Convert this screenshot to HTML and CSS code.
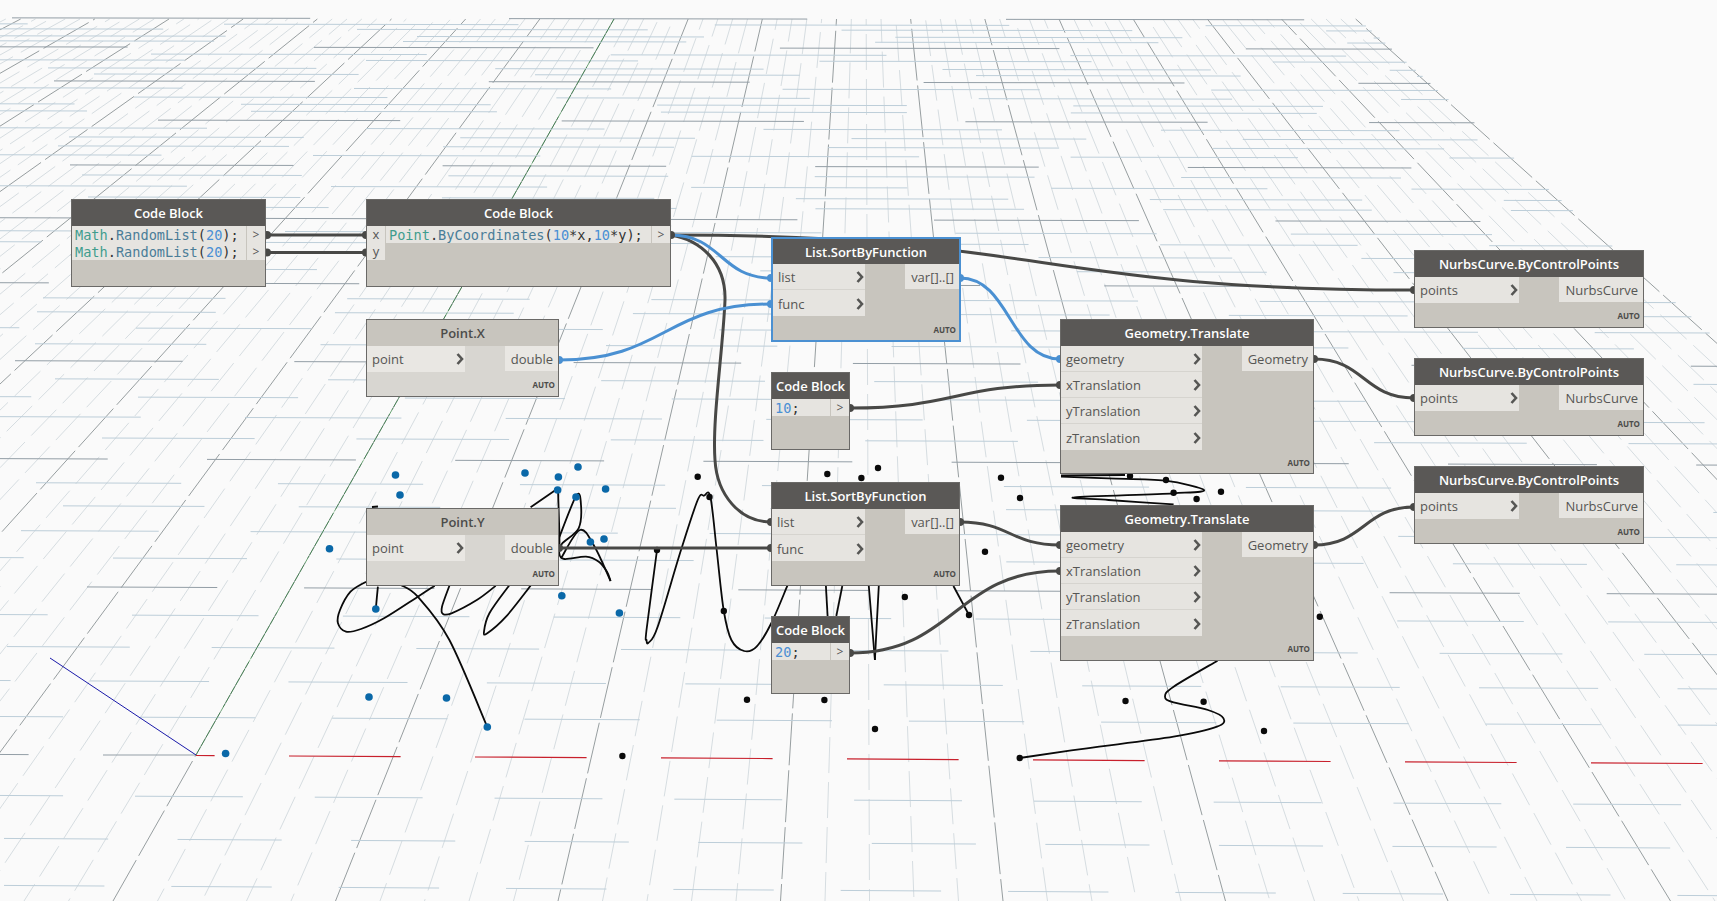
FILE: index.html
```html
<!DOCTYPE html>
<html lang="en">
<head>
  <meta charset="UTF-8" />
  <title>Dynamo graph</title>
  <link rel="stylesheet" href="styles.css">
</head>
<body>
  <div class="canvas">
    <!-- background 3D preview, filled in by scene.js -->
    <svg class="layer scene" id="scene" width="1717" height="901"></svg>

    <svg class="layer wires" width="1717" height="901">
      <path d="M267 235H366" />
      <path d="M267 252.500H366" />
      <path d="M671 235C700 240 726 262 725 300C723 350 712 420 715 460C717 495 740 522 771 522" />
      <path d="M671 235C1042 235 1042 290 1414 290" />
      <path d="M850 408C955 408 955 385 1060 385" />
      <path d="M1314 359C1364 359 1364 398 1414 398" />
      <path d="M559 548H771" />
      <path d="M960 522C1010 522 1010 545 1060 545" />
      <path d="M850 653C955 653 955 571 1060 571" />
      <path d="M1314 545C1364 545 1364 507 1414 507" />
      <path class="sel" d="M671 235C721 235 721 278 771 278" />
      <path class="sel" d="M559 360C665 360 665 304 771 304" />
      <path class="sel" d="M960 278C1010 278 1010 359 1060 359" />
      <g class="nubs">
        <circle cx="267" cy="235" r="4" /><circle cx="366" cy="235" r="4" />
        <circle cx="267" cy="252.500" r="4" /><circle cx="366" cy="252.500" r="4" />
        <circle cx="671" cy="235" r="4" />
        <circle cx="771" cy="522" r="4" /><circle cx="771" cy="548" r="4" />
        <circle cx="559" cy="548" r="4" /><circle cx="960" cy="522" r="4" />
        <circle cx="1060" cy="545" r="4" /><circle cx="850" cy="653" r="4" />
        <circle cx="1060" cy="571" r="4" /><circle cx="850" cy="408" r="4" />
        <circle cx="1060" cy="385" r="4" /><circle cx="1314" cy="359" r="4" />
        <circle cx="1414" cy="398" r="4" /><circle cx="1414" cy="290" r="4" />
        <circle cx="1314" cy="545" r="4" /><circle cx="1414" cy="507" r="4" />
      </g>
      <g class="nubs sel">
        <circle cx="771" cy="278" r="4" /><circle cx="771" cy="304" r="4" />
        <circle cx="559" cy="360" r="4" /><circle cx="960" cy="278" r="4" />
        <circle cx="1060" cy="359" r="4" />
      </g>
    </svg>

    <svg width="0" height="0" class="defs">
      <symbol id="chev" viewBox="0 0 8 12"><path d="M1.500 1L6 6L1.500 11" /></symbol>
    </svg>

    <div class="node code-node cb-random">
      <div class="title">Code Block</div>
      <div class="code-grid two-col">
        <div class="code">
          <div class="line"><span class="cls">Math</span>.<span class="fn">RandomList</span>(<span class="num">20</span>);</div>
          <div class="line"><span class="cls">Math</span>.<span class="fn">RandomList</span>(<span class="num">20</span>);</div>
        </div>
        <div class="outs"><div class="out">&gt;</div><div class="out">&gt;</div></div>
      </div>
    </div>

    <div class="node code-node cb-point">
      <div class="title">Code Block</div>
      <div class="code-grid three-col">
        <div class="ins"><div class="var">x</div><div class="var">y</div></div>
        <div class="code">
          <div class="line"><span class="cls">Point</span>.<span class="fn">ByCoordinates</span>(<span class="num">10</span>*x,<span class="num">10</span>*y);</div>
        </div>
        <div class="outs"><div class="out">&gt;</div></div>
      </div>
    </div>

    <div class="node code-node cb-ten">
      <div class="title">Code Block</div>
      <div class="code-grid two-col">
        <div class="code"><div class="line"><span class="num">10</span>;</div></div>
        <div class="outs"><div class="out">&gt;</div></div>
      </div>
    </div>

    <div class="node code-node cb-twenty">
      <div class="title">Code Block</div>
      <div class="code-grid two-col">
        <div class="code"><div class="line"><span class="num">20</span>;</div></div>
        <div class="outs"><div class="out">&gt;</div></div>
      </div>
    </div>

    <div class="node fn-node off point-x">
      <div class="title">Point.X</div>
      <div class="ports">
        <div class="inputs">
          <div class="port">point<svg class="chev"><use href="#chev" /></svg></div>
        </div>
        <div class="output">double</div>
      </div>
      <div class="lacing">AUTO</div>
    </div>

    <div class="node fn-node off point-y">
      <div class="title">Point.Y</div>
      <div class="ports">
        <div class="inputs">
          <div class="port">point<svg class="chev"><use href="#chev" /></svg></div>
        </div>
        <div class="output">double</div>
      </div>
      <div class="lacing">AUTO</div>
    </div>

    <div class="node fn-node sort selected sort-a">
      <div class="title">List.SortByFunction</div>
      <div class="ports">
        <div class="inputs">
          <div class="port">list<svg class="chev"><use href="#chev" /></svg></div>
          <div class="port">func<svg class="chev"><use href="#chev" /></svg></div>
        </div>
        <div class="output">var[]..[]</div>
      </div>
      <div class="lacing">AUTO</div>
    </div>

    <div class="node fn-node sort sort-b">
      <div class="title">List.SortByFunction</div>
      <div class="ports">
        <div class="inputs">
          <div class="port">list<svg class="chev"><use href="#chev" /></svg></div>
          <div class="port">func<svg class="chev"><use href="#chev" /></svg></div>
        </div>
        <div class="output">var[]..[]</div>
      </div>
      <div class="lacing">AUTO</div>
    </div>

    <div class="node fn-node geo geo-a">
      <div class="title">Geometry.Translate</div>
      <div class="ports">
        <div class="inputs">
          <div class="port">geometry<svg class="chev"><use href="#chev" /></svg></div>
          <div class="port">xTranslation<svg class="chev"><use href="#chev" /></svg></div>
          <div class="port">yTranslation<svg class="chev"><use href="#chev" /></svg></div>
          <div class="port">zTranslation<svg class="chev"><use href="#chev" /></svg></div>
        </div>
        <div class="output">Geometry</div>
      </div>
      <div class="lacing">AUTO</div>
    </div>

    <div class="node fn-node geo geo-b">
      <div class="title">Geometry.Translate</div>
      <div class="ports">
        <div class="inputs">
          <div class="port">geometry<svg class="chev"><use href="#chev" /></svg></div>
          <div class="port">xTranslation<svg class="chev"><use href="#chev" /></svg></div>
          <div class="port">yTranslation<svg class="chev"><use href="#chev" /></svg></div>
          <div class="port">zTranslation<svg class="chev"><use href="#chev" /></svg></div>
        </div>
        <div class="output">Geometry</div>
      </div>
      <div class="lacing">AUTO</div>
    </div>

    <div class="node fn-node nurbs nurbs-a">
      <div class="title">NurbsCurve.ByControlPoints</div>
      <div class="ports">
        <div class="inputs">
          <div class="port">points<svg class="chev"><use href="#chev" /></svg></div>
        </div>
        <div class="output">NurbsCurve</div>
      </div>
      <div class="lacing">AUTO</div>
    </div>

    <div class="node fn-node nurbs nurbs-b">
      <div class="title">NurbsCurve.ByControlPoints</div>
      <div class="ports">
        <div class="inputs">
          <div class="port">points<svg class="chev"><use href="#chev" /></svg></div>
        </div>
        <div class="output">NurbsCurve</div>
      </div>
      <div class="lacing">AUTO</div>
    </div>

    <div class="node fn-node nurbs nurbs-c">
      <div class="title">NurbsCurve.ByControlPoints</div>
      <div class="ports">
        <div class="inputs">
          <div class="port">points<svg class="chev"><use href="#chev" /></svg></div>
        </div>
        <div class="output">NurbsCurve</div>
      </div>
      <div class="lacing">AUTO</div>
    </div>
  </div>

  <script src="scene.js"></script>
</body>
</html>
```

FILE: styles.css
```css
:root {
  --head: #5a5856;
  --body: #c8c5be;
  --cell: #e6e4e0;
  --ink: #565654;
  --wire: #484846;
  --select: #4a90d2;
}

html, body {
  margin: 0;
  height: 100%;
  overflow: hidden;
  background: #fafafa;
  font-family: "Open Sans", sans-serif;
}

.canvas {
  position: relative;
  width: 1717px;
  height: 901px;
  overflow: hidden;
}

.layer {
  position: absolute;
  left: 0;
  top: 0;
}

.defs {
  position: absolute;
}

/* 3D preview */
.row { stroke: #bdced9; stroke-width: 1; }
.row.major { stroke: #939ea6; stroke-width: 1; }
.row.red { stroke: #c8202c; stroke-width: 1.200; }
.depth { stroke: #d6dde1; stroke-width: 1; stroke-dasharray: 36 9; }
.depth.major { stroke: #6c7579; stroke-width: 0.700; stroke-dasharray: 52 5; }
.axis-green { stroke: #0c6a1c; stroke-width: 0.600; stroke-dasharray: 9 1; }
.axis-blue { stroke: #0000a0; stroke-width: 0.900; }
.curve { fill: none; stroke: #0a0a0a; stroke-width: 1.800; stroke-linejoin: round; }
.dot { fill: #0a0a0a; }
.dot.blue { fill: #0a68a8; }

/* wires */
.wires path { fill: none; stroke: var(--wire); stroke-width: 3; }
.wires path.sel { stroke: var(--select); }
.nubs circle { fill: var(--wire); }
.nubs.sel circle { fill: var(--select); }

/* nodes */
.node {
  position: absolute;
  box-sizing: border-box;
  display: flex;
  flex-direction: column;
  border: 1px solid #6a6967;
  background: var(--body);
  color: var(--ink);
}

.node.selected {
  border: 2px solid var(--select);
}

.title {
  flex: none;
  height: 26px;
  line-height: 27px;
  background: var(--head);
  color: #fff;
  text-align: center;
  font-size: 13px;
  font-weight: 600;
  white-space: nowrap;
}

.selected .title {
  height: 25px;
}

.off {
  background: #d8d6d1;
}

.off .title {
  background: var(--body);
  color: #4c4c4a;
}

.off .port, .off .output {
  background: #e9e7e3;
}

.ports {
  display: flex;
  justify-content: space-between;
  align-items: flex-start;
}

.inputs {
  display: flex;
  flex-direction: column;
}

.port {
  box-sizing: border-box;
  display: flex;
  justify-content: space-between;
  align-items: center;
  height: 26px;
  padding: 0 1px 1px 5px;
  background: var(--cell);
  border-bottom: 1px solid #d6d4cf;
  font-size: 13px;
}

.geo .port, .sort .port {
  padding-top: 1px;
  padding-bottom: 0;
}

.port:last-child {
  border-bottom: 0;
}

.chev {
  width: 8px;
  height: 12px;
  fill: none;
  stroke: #565654;
  stroke-width: 2.600;
}

.output {
  box-sizing: border-box;
  height: 25px;
  line-height: 26px;
  padding-right: 5px;
  background: var(--cell);
  text-align: right;
  font-size: 13px;
}

.lacing {
  margin-top: auto;
  padding: 0 3px 6px 0;
  text-align: right;
  font-size: 8px;
  font-weight: 700;
  line-height: 10px;
  color: #4c4c4a;
}

.selected .lacing {
  padding-bottom: 5px;
}

.geo-a .lacing {
  padding-bottom: 5px;
}

/* code blocks */
.code-grid {
  display: grid;
}

.two-col { grid-template-columns: 1fr 19px; }
.three-col { grid-template-columns: 19px 1fr 19px; }

.line {
  height: 17px;
  line-height: 19px;
  background: var(--cell);
  padding-left: 3px;
  font-family: "DejaVu Sans Mono", monospace;
  font-size: 13.600px;
  color: #333;
  white-space: nowrap;
}

.out, .var {
  height: 17px;
  line-height: 17px;
  background: var(--cell);
  text-align: center;
  color: #555;
}

.out {
  margin-left: 1px;
  font-size: 12px;
}

.var {
  margin-right: 1px;
  font-size: 13px;
}

.cls { color: #3f9d8e; }
.fn { color: #4a7d98; }
.num { color: #4a8fd4; }

/* function node columns */
.point-x .inputs, .point-y .inputs { width: 98px; }
.point-x .output, .point-y .output { width: 53px; }
.sort .inputs { width: 93px; }
.sort-a .inputs { width: 92px; }
.sort .output { width: 54px; }
.geo .inputs { width: 141px; }
.geo .output { width: 71px; }
.nurbs .inputs { width: 104px; }
.nurbs .output { width: 84px; }

/* where each node sits on the graph */
.cb-random { left: 71px; top: 199px; width: 195px; height: 88px; }
.cb-point { left: 366px; top: 199px; width: 305px; height: 88px; }
.cb-ten { left: 771px; top: 372px; width: 79px; height: 78px; }
.cb-twenty { left: 771px; top: 616px; width: 79px; height: 78px; }
.point-x { left: 366px; top: 319px; width: 193px; height: 78px; }
.point-y { left: 366px; top: 508px; width: 193px; height: 78px; }
.sort-a { left: 771px; top: 237px; width: 190px; height: 105px; }
.sort-b { left: 771px; top: 482px; width: 189px; height: 104px; }
.geo-a { left: 1060px; top: 319px; width: 254px; height: 155px; }
.geo-b { left: 1060px; top: 505px; width: 254px; height: 156px; }
.nurbs-a { left: 1414px; top: 250px; width: 230px; height: 78px; }
.nurbs-b { left: 1414px; top: 358px; width: 230px; height: 78px; }
.nurbs-c { left: 1414px; top: 466px; width: 230px; height: 78px; }
```

FILE: scene.js
```js
// background preview: perspective grid, axes, random points and their curves
const svg = document.getElementById('scene');
const NS = 'http://www.w3.org/2000/svg';

function add(tag, attrs) {
  const el = document.createElementNS(NS, tag);
  for (const k in attrs) el.setAttribute(k, attrs[k]);
  svg.appendChild(el);
  return el;
}

// vanishing point of the depth lines
const vx = 864.5, vy = -422;

function depthX(x901, y) {
  return vx + (x901 - vx) * (y - vy) / (901 - vy);
}

// right hand edge of the grid
function edgeX(y) {
  return 1360 + (y - 21) * 1.119;
}

for (let i = -50; i <= 50; i++) {
  const x901 = 113 + 44.5 * i;
  const major = i % 5 === 0;
  add('line', {
    x1: x901, y1: 901, x2: depthX(x901, 19), y2: 19,
    class: major ? 'depth major' : 'depth',
    'stroke-dashoffset': (i * 17 + 500) % 45
  });
}

// [y, x where a dash starts] for each row of the grid, far to near
const rows = [
  [18,12],[24,224],[29,357],[36,417],[41,403],[47,314],[54,151],[60,366],[68,48],[74,94],
  [81,54],[88,354],[97,134],[104,241],[111,251],[120,158],[128,366],[137,69],[146,58],[155,313],
  [165,70],[175,82],[186,331],[197,88],[207,120],[218,251],[231,285],[242,173],[255,70],[269,127],
  [283,173],[298,43],[312,37],[328,136],[344,35],[361,15],[379,55],[397,138],[417,245],[438,102],
  [459,207],[483,36],[506,63],[531,21],[558,113],[587,87],[615,132],[647,7],[681,90],[717,140],
  [755,103],[796,135],[839,4],[886,4]
];

rows.forEach(function (r, i) {
  const period = 497 - 6.22 * i;
  const len = period * 0.6;
  const slope = 0.0015 + (r[0] - 18) / 737 * 0.0038;
  let x = r[1];
  while (x + len > 0) x -= period;
  for (; x < 1717; x += period) {
    const a = x, b = x + len;
    const limit = edgeX(r[0] + slope * b);
    if (a > limit) break;
    const x2 = Math.min(b, limit);
    let cls = i % 5 === 0 ? 'row major' : 'row';
    if (i === 50 && x2 > 196) {
      // x axis is red from the origin on
      const from = Math.max(a, 196);
      if (a < 196) add('line', { x1: a, y1: r[0], x2: 196, y2: r[0], class: cls });
      add('line', { x1: from, y1: r[0] + slope * (from - 100), x2: x2, y2: r[0] + slope * (x2 - 100), class: 'row red' });
      continue;
    }
    add('line', { x1: a, y1: r[0] + slope * (a - 100), x2: x2, y2: r[0] + slope * (x2 - 100), class: cls });
  }
});

add('line', { x1: 196, y1: 755, x2: 614, y2: 19, class: 'axis-green' });
add('line', { x1: 196, y1: 755, x2: 50, y2: 658, class: 'axis-blue' });

// smooth line through a list of points
function smooth(pts) {
  let d = 'M' + pts[0][0] + ' ' + pts[0][1];
  for (let i = 0; i < pts.length - 1; i++) {
    const p0 = pts[i - 1] || pts[i], p1 = pts[i], p2 = pts[i + 1], p3 = pts[i + 2] || p2;
    d += 'C' + (p1[0] + (p2[0] - p0[0]) / 6).toFixed(1) + ' ' + (p1[1] + (p2[1] - p0[1]) / 6).toFixed(1) +
      ' ' + (p2[0] - (p3[0] - p1[0]) / 6).toFixed(1) + ' ' + (p2[1] - (p3[1] - p1[1]) / 6).toFixed(1) +
      ' ' + p2[0] + ' ' + p2[1];
  }
  return d;
}

const curves = [
  // first point set
  [[487.3,727],[449.4,640],[417.8,596.7],[401,585]],
  [[377.9,586.7],[375.8,609]],
  [[366,581.7],[350.5,591.7],[340,610],[337.9,623],[346,631.7],[361,629],[384,618.3],[417.8,596.7],[434.7,585.7]],
  [[449.4,585.7],[442,606.7],[443,614],[451.5,613.3],[476.8,600],[495.7,585.7]],
  [[509,585.7],[489.4,613.3],[484,631.7],[487.3,633.3],[506,616.7],[530.6,585.7]],
  [[530.6,507.3],[556.7,489.3]],
  [[558,489.3],[559.3,530],[559.5,546]],
  [[559,538],[576.5,495.3],[581,505],[578.6,528.3],[561.8,544],[559.3,553.3],[564.3,559],[586,556.7],[598.8,561.7],[607,571.7],[610.6,581]],
  [[561,558.3],[580,530],[594.6,546.7],[610.6,581]],
  [[372,507],[378,506.500]],
  // second point set
  [[657,550],[646.500,630],[646.500,640],[648.500,642.7],[657.7,626.7],[681,550],[697.7,500],[704,495.7],[710.4,497],[716.7,550],[723.8,611],[731.4,640],[744,651],[756.6,646.7],[771.4,623],[787.4,585.7]],
  [[825.9,586],[827.6,616]],
  [[842.3,586],[836.3,616]],
  [[868.8,586],[874.9,660]],
  [[878.8,586],[874.9,660]],
  [[953.4,586],[969,615]],
  [[1217.5,660.7],[1173.6,686.7],[1165,696.7],[1173.6,702.3],[1208,710],[1223.5,718.3],[1217,726.7],[1173.6,736.7],[1087,748.3],[1019.7,758]],
  [[1061,476.7],[1108.6,478.3],[1165,480.7],[1204,490],[1173.6,493.3],[1074.8,497.3],[1108.6,500],[1173.6,504.3]],
  [[1061,475.500],[1125,475]]
];
curves.forEach(function (c) {
  add('path', { d: smooth(c), class: 'curve' });
});

const blueDots = [
  [395.5,475],[400,495],[329.5,548.7],[525,473],[558.4,477],[578,467],[557.6,490],[576,497],[605.6,489],
  [590.4,542],[604,539],[561.8,595.7],[619.4,613],[375.8,609],[369,697],[446.5,698],[487.3,727],[225.6,753.5]
];
const blackDots = [
  [697.7,476.7],[709.5,497],[827.3,474],[861.4,478],[878,468],[657,550],[723.8,611],[904.8,597],[747,699.7],
  [824.4,700],[875,729],[622.4,756],[1001,477.7],[1020,498],[1130,476],[1166,480],[1221,491.7],[1173.6,492.7],
  [1196.6,499],[985,551.7],[969,615],[1319.8,616.7],[1125.5,701],[1203.6,701.7],[1264,731],[1019.7,758]
];
blueDots.forEach(function (p) {
  add('circle', { cx: p[0], cy: p[1], r: 3.8, class: 'dot blue' });
});
blackDots.forEach(function (p) {
  add('circle', { cx: p[0], cy: p[1], r: 3.2, class: 'dot' });
});
```
